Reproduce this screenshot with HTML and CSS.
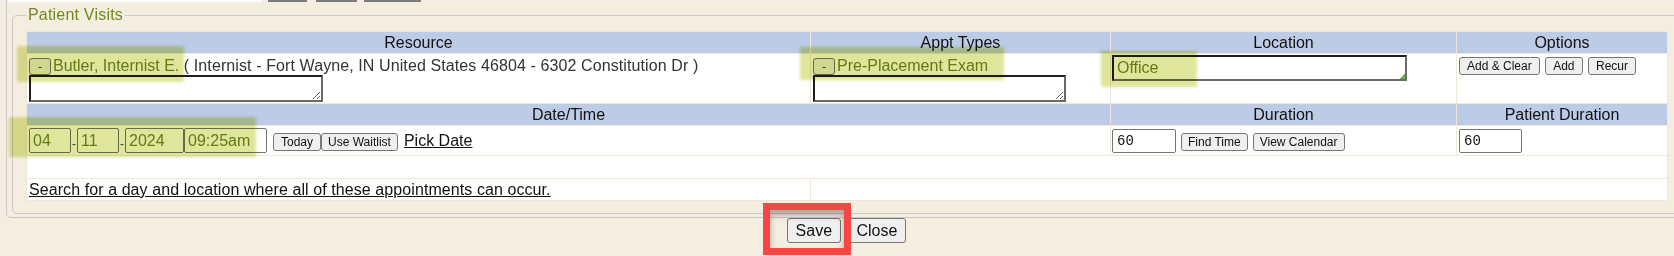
FILE: index.html
```html
<!DOCTYPE html>
<html lang="en">
<head>
    <meta charset="UTF-8">
    <meta name="viewport" content="width=device-width, initial-scale=1.0">
    <title>Patient Visits</title>
    <link rel="stylesheet" href="styles.css">
</head>
<body>
    <div class="page">
        <div class="outer">
            <!-- bottom edge of the search bar above, scrolled out of view -->
            <div class="toolbar">
                <span class="tool-input"></span>
                <span class="tool-btn"></span>
                <span class="tool-btn wide"></span>
                <span class="tool-btn wider"></span>
            </div>

            <fieldset class="visits">
                <legend>Patient Visits</legend>
                <table class="visit-table">
                    <colgroup>
                        <col class="col-resource">
                        <col class="col-appt">
                        <col class="col-location">
                        <col class="col-options">
                    </colgroup>
                    <tr class="head">
                        <th>Resource</th>
                        <th>Appt Types</th>
                        <th>Location</th>
                        <th>Options</th>
                    </tr>
                    <tr class="pick-row">
                        <td class="pick-cell">
                            <div class="picked">
                                <button type="button" class="mini">-</button>
                                <span class="olive">Butler, Internist E.</span>
                                <span class="detail">&nbsp;( Internist - Fort Wayne, IN United States 46804 - 6302 Constitution Dr )</span>
                            </div>
                            <textarea class="pick-box resource-box" autocomplete="off"></textarea>
                        </td>
                        <td class="pick-cell">
                            <div class="picked">
                                <button type="button" class="mini">-</button>
                                <span class="olive">Pre-Placement Exam</span>
                            </div>
                            <textarea class="pick-box appt-box" autocomplete="off"></textarea>
                        </td>
                        <td class="location-cell">
                            <input type="text" class="location-box" value="Office" autocomplete="off">
                        </td>
                        <td class="options-cell">
                            <button type="button" class="small">Add &amp; Clear</button>
                            <button type="button" class="small">Add</button>
                            <button type="button" class="small">Recur</button>
                        </td>
                    </tr>
                    <tr class="head">
                        <th colspan="2">Date/Time</th>
                        <th>Duration</th>
                        <th>Patient Duration</th>
                    </tr>
                    <tr class="time-row">
                        <td colspan="2">
                            <div class="date-line">
                                <input type="text" class="dt dt-month" value="04"><span class="sep">-</span><input type="text" class="dt dt-day" value="11"><span class="sep">-</span><input type="text" class="dt dt-year" value="2024"><input type="text" class="dt dt-time" value="09:25am">
                                <button type="button" class="small today">Today</button><button type="button" class="small">Use Waitlist</button>
                                <a href="#" class="pick-date">Pick Date</a>
                            </div>
                        </td>
                        <td class="duration-cell">
                            <div class="date-line">
                                <input type="text" class="num" value="60">
                                <button type="button" class="small gap">Find Time</button>
                                <button type="button" class="small gap">View Calendar</button>
                            </div>
                        </td>
                        <td class="patient-cell">
                            <input type="text" class="num" value="60">
                        </td>
                    </tr>
                    <tr class="blank-row">
                        <td colspan="4"></td>
                    </tr>
                    <tr class="search-row">
                        <td><a href="#">Search for a day and location where all of these appointments can occur.</a></td>
                        <td colspan="3"></td>
                    </tr>
                </table>
            </fieldset>
        </div>

        <div class="actions">
            <button type="button" class="big">Save</button>
            <button type="button" class="big">Close</button>
        </div>

        <!-- review marks drawn over the form -->
        <div class="mark hl-resource"></div>
        <div class="mark hl-appt"></div>
        <div class="mark hl-location"></div>
        <div class="mark hl-date"></div>
        <div class="save-mark"></div>
    </div>
</body>
</html>
```

FILE: styles.css
```css
body {
    margin: 0;
    background-color: #f4eee1;
    font-family: "Liberation Sans", Arial, sans-serif;
    font-size: 16px;
    color: #111;
    overflow: hidden;
}

button, input, textarea {
    font-family: inherit;
}

.page {
    position: relative;
    width: 1693px;
    height: 256px;
}

.outer {
    margin: 0 6px;
    padding: 0 1px;
    border: 1px solid #c9c9c9;
    border-top: none;
    border-radius: 0 0 5px 5px;
}

.toolbar {
    display: flex;
    align-items: flex-end;
    height: 2px;
    overflow: hidden;
}

.tool-input {
    width: 254px;
    height: 20px;
    background-color: #fff;
}

.tool-btn {
    width: 39px;
    height: 20px;
    margin-left: 6px;
    background-color: #e9e9e9;
    border-bottom: 2px solid #7a7a7a;
    box-sizing: border-box;
}

.tool-btn.wide {
    width: 41px;
    margin-left: 9px;
}

.tool-btn.wider {
    width: 57px;
    margin-left: 7px;
}

.visits {
    margin: 4px 4px 3px 4px;
    padding: 7px 13px 12px 13px;
    border: 1px solid #c9c9c9;
    border-radius: 5px;
}

.visits legend {
    padding: 0 2px;
    line-height: 18px;
    letter-spacing: 0.2px;
    color: #72881f;
}

.visit-table {
    width: 100%;
    table-layout: fixed;
    border-collapse: collapse;
    background-color: #fff;
}

.col-resource { width: 784px; }
.col-appt { width: 300px; }
.col-location { width: 346px; }
.col-options { width: 211px; }

th, td {
    border: 1px solid #efe8da;
    padding: 0;
}

th {
    height: 21px;
    background-color: #bccbe6;
    font-weight: normal;
    text-align: center;
    color: #111;
}

td {
    vertical-align: top;
}

.olive {
    color: #72881f;
}

.detail {
    color: #333;
    letter-spacing: 0.1px;
}

.pick-row td {
    height: 46px;
}

.pick-cell {
    padding: 3px 2px 0 2px;
}

.picked {
    display: flex;
    align-items: center;
    height: 18px;
    white-space: pre;
}

button.mini {
    width: 22px;
    height: 17px;
    margin: 0 2px 0 0;
    padding: 0;
    font-size: 11px;
    background-color: #efefef;
    border: 1px solid #767676;
    border-radius: 3px;
    color: #222;
}

.pick-box {
    display: block;
    height: 27px;
    margin: 0;
    padding: 0;
    box-sizing: border-box;
    border: 2px solid;
    border-color: #1e1e1e #6a6a6a #6a6a6a #1e1e1e;
    background-color: #fff;
    resize: both;
}

.resource-box { width: 294px; }
.appt-box { width: 253px; }

.location-cell {
    padding: 1px 0 0 1px;
}

.location-box {
    width: 295px;
    height: 26px;
    margin: 0;
    padding: 0 3px;
    box-sizing: border-box;
    border: 2px solid;
    border-color: #1e1e1e #6a6a6a #6a6a6a #1e1e1e;
    font-size: 16px;
    color: #72881f;
    background: #fff linear-gradient(135deg, transparent 50%, #6fb23a 50%) no-repeat right bottom / 6px 6px;
}

.options-cell {
    padding: 3px 2px 0 2px;
}

button.small {
    height: 18px;
    margin: 0;
    padding: 0 6px;
    font-size: 12px;
    line-height: 14px;
    background-color: #efefef;
    border: 1px solid #767676;
    border-radius: 3px;
    color: #111;
    vertical-align: top;
}

.options-cell button.small {
    padding: 0 7px;
    margin-right: 1px;
}

.time-row td {
    height: 27px;
    padding: 2px 2px 0 2px;
}

.time-row td.duration-cell {
    padding-left: 1px;
}

.date-line {
    display: flex;
    align-items: center;
}

.dt {
    height: 25px;
    margin: 0;
    padding: 0 3px;
    box-sizing: border-box;
    border: 1px solid #767676;
    border-radius: 2px;
    font-size: 16px;
    color: #72881f;
    background-color: #fff;
}

.dt-month, .dt-day { width: 42px; }
.dt-year { width: 59px; }
.dt-time { width: 83px; }

.sep {
    width: 6px;
    font-size: 12px;
    line-height: 12px;
    text-align: center;
    padding-top: 7px;
    color: #444;
}

.date-line button.small {
    margin-top: 2px;
}

button.today {
    margin-left: 6px;
    padding: 0 7px;
}

button.gap {
    margin-left: 5px;
}

.pick-date {
    margin-left: 6px;
    color: #111;
}

.num {
    width: 64px;
    height: 24px;
    margin: 1px 0 0 0;
    padding: 0 4px;
    box-sizing: border-box;
    border: 1px solid #767676;
    border-radius: 2px;
    font-family: "Liberation Mono", monospace;
    font-size: 14px;
    color: #111;
    background-color: #fff;
}

.patient-cell .num {
    width: 63px;
}

.blank-row td {
    height: 22px;
}

.search-row td {
    height: 21px;
    padding: 0 2px;
    vertical-align: middle;
}

.search-row a {
    color: #111;
    letter-spacing: 0.08px;
}

.actions {
    text-align: center;
}

button.big {
    height: 25px;
    margin: 0 1px;
    padding: 0 8px;
    font-size: 16px;
    background-color: #efefef;
    border: 1px solid #767676;
    border-radius: 3px;
    color: #111;
}

/* highlight marks from the screenshot review */
.mark {
    position: absolute;
    background-color: #dfe59a;
    mix-blend-mode: multiply;
    filter: blur(1.5px);
}

.hl-resource { left: 17px; top: 46px; width: 167px; height: 36px; }
.hl-appt { left: 800px; top: 47px; width: 204px; height: 33px; }
.hl-location { left: 1101px; top: 51px; width: 96px; height: 36px; }
.hl-date { left: 9px; top: 117px; width: 247px; height: 40px; }

.save-mark {
    position: absolute;
    left: 763px;
    top: 203px;
    width: 88px;
    height: 52px;
    box-sizing: border-box;
    border: 7px solid #f84545;
    box-shadow: inset 0 5px 6px rgba(0, 0, 0, 0.3);
}
```
